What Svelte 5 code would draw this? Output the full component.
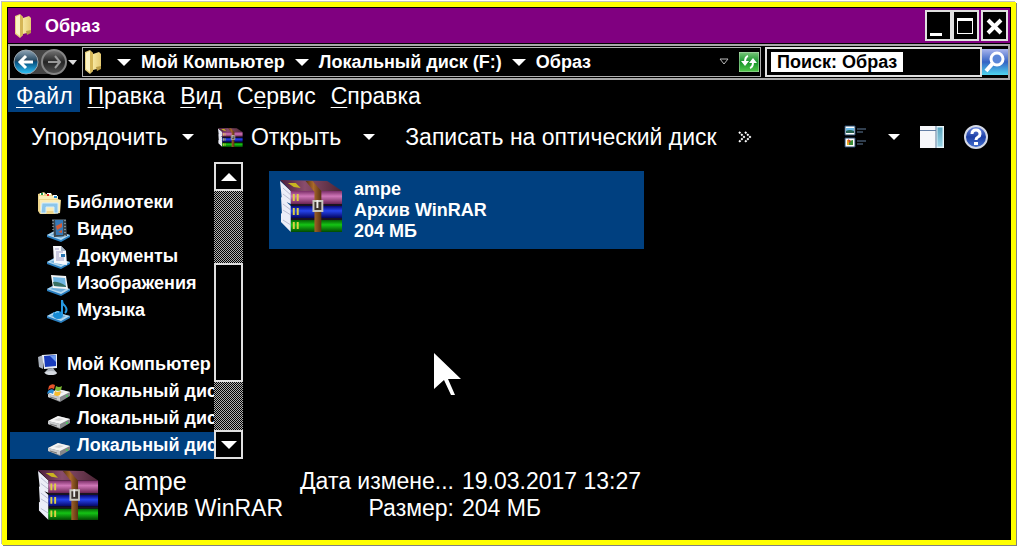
<script lang="ts">
    let query = $state("Поиск: Образ");
    let selectedNode = $state(8);
    let openMenu = $state("Файл");

    const menu = [
        { before: "", key: "Ф", after: "айл" },
        { before: "", key: "П", after: "равка" },
        { before: "", key: "В", after: "ид" },
        { before: "С", key: "е", after: "рвис" },
        { before: "", key: "С", after: "правка" },
    ];

    const crumbs = ["Мой Компьютер", "Локальный диск (F:)", "Образ"];

    const tree = [
        { id: 0, icon: "libraries", label: "Библиотеки", root: true },
        { id: 1, icon: "video", label: "Видео" },
        { id: 2, icon: "documents", label: "Документы" },
        { id: 3, icon: "images", label: "Изображения" },
        { id: 4, icon: "music", label: "Музыка" },
        { id: 5, icon: "computer", label: "Мой Компьютер", root: true, gap: true },
        { id: 6, icon: "system", label: "Локальный диск" },
        { id: 7, icon: "drive", label: "Локальный диск" },
        { id: 8, icon: "drive", label: "Локальный диск" },
    ];
</script>

{#snippet folder()}
    <svg class="folder" viewBox="0 0 20 24" aria-hidden="true">
        <path d="M2 2l5-2 3 3v18l-3 3-5-4z" fill="#e6cf7c" />
        <path d="M3 3l4-2v21l-4-3z" fill="#fbf3c4" />
        <path d="M10 4l6-2 2 2v14l-8 2z" fill="url(#paper)" />
        <path d="M7 1l3 2v18l-3 2z" fill="#d5b656" />
        <path d="M13 17l5-1v3l-4 2z" fill="#b99b45" />
    </svg>
{/snippet}

{#snippet books()}
    <svg class="books" viewBox="0 0 64 52" preserveAspectRatio="none" aria-hidden="true">
        <path d="M0 1l11 10v13L2 20zM1 17l10 9v14l-9-6zM1 33l10 7v12L1 42z" fill="#eceef8" />
        <path d="M3 8l8 7M3 14l8 6M3 24l8 6M3 30l8 5M3 40l8 5" stroke="#b9bcd2" />
        <path d="M0 0l48 1 15 10H11z" fill="url(#cover)" />
        <path d="M11 11h52v13H11z" fill="url(#pink)" />
        <path d="M11 26h52v12H11z" fill="url(#blue)" />
        <path d="M11 40h52v12H11z" fill="url(#green)" />
        <path d="M11 24h52v2H11zM11 38h52v2H11z" fill="#191421" />
        <path d="M8 3l8 0 5 5-7-1z" fill="#c9b420" />
        <path d="M14 14v7M18 14v7M14 28v7M18 28v7M14 42v7M18 42v7" stroke="#ded044" stroke-width="2" />
        <path d="M26 1h7l9 10v41h-7V12z" fill="url(#strap)" />
        <path d="M34 21h9v10h-9z" fill="#3b332c" stroke="#c9c7bd" stroke-width="2" />
        <path d="M38 20v8" stroke="#eee" stroke-width="2" />
    </svg>
{/snippet}

{#snippet arrow()}
    <svg class="arrow" viewBox="0 0 12 6" aria-hidden="true"><path d="M0 0h12L6 6z" fill="#fff" /></svg>
{/snippet}

{#snippet nodeIcon(name: string)}
    <svg class="node-icon" viewBox="0 0 24 24" aria-hidden="true">
        {#if name === "libraries"}
            <path d="M1 3l6-2 2 2h3l2-1 2 3h5v3l3 1-1 13-6 1H3L1 20z" fill="#eed58b" />
            <path d="M2 5h19v3H2zM3 9h20v11H3z" fill="#fbedb7" />
            <path d="M3 3h4M10 3h4M16 5h4" stroke="#fff" stroke-width="2" />
            <path d="M4 3h2" stroke="#2a9a48" stroke-width="2" />
            <path d="M10 4h2" stroke="#d22" stroke-width="2" />
            <path d="M17 6h3" stroke="#28c" stroke-width="2" />
            <path d="M5 12h16v10h-4v-6H9v6H4z" fill="#8cc6ea" stroke="#d6effc" />
        {:else if name === "computer"}
            <path d="M1 4l5-2v14l-4-2z" fill="#a9b0ba" />
            <path d="M5 2l15-1v14L7 16z" fill="#e8edf5" />
            <path d="M7 3l12-1v11L8 14z" fill="#183bbb" />
            <path d="M13 3l6-1v7z" fill="#6f9df0" />
            <path d="M11 16l5-1 3 4-5 2-7-1z" fill="#aab0b8" />
            <ellipse cx="14" cy="20" rx="6" ry="2" fill="#d5dae0" />
        {:else if name === "drive" || name === "system"}
            <path d="M1 14l10-5 12 3v4l-10 6L1 17z" fill="#85878a" />
            <path d="M1 14l10-5 12 3-10 5z" fill="#f4f4f4" />
            <path d="M1 14l12 3v4L1 17z" fill="#c9cbcd" />
            <path d="M7 13l5-2 5 1-5 2z" fill="#d4d4d4" />
            <path d="M3 17l7 2" stroke="#777" />
            <path d="M19 16h2" stroke="#4fc060" stroke-width="2" />
            {#if name === "system"}
                <path d="M2 6q3-3 6-1L7 9Q4 7 1 10z" fill="#e6532b" />
                <path d="M9 6q3 2 6 0l-1 4q-3 2-6 0z" fill="#7fbc35" />
                <path d="M1 11q3-3 6-1l-1 4q-3-2-6 0z" fill="#2b8ed8" />
                <path d="M8 11q3 2 6 0l-1 4q-3 2-6 0z" fill="#f6bb2e" />
            {/if}
        {:else}
            <path d="M0 17l7-4 16 4v2l-9 5L0 19z" fill="#2a7fc0" />
            <path d="M0 17l8-4 15 4-9 5z" fill="#b4d8ef" />
            <path d="M3 17l5-2 11 2-5 3z" fill="#6faedb" />
            {#if name === "video"}
                <path d="M5 1h14l1 17-13 1z" fill="#39444c" />
                <path d="M8 2h8v15H9z" fill="#3579b7" />
                <path d="M9 8l6-3v4l-5 3zM11 14l4-2v3z" fill="#d35b35" />
                <path d="M6 2v16M18 2v16" stroke="#c7d0d4" stroke-dasharray="1 2" />
            {:else if name === "documents"}
                <path d="M6 1h8l5 5 1 14-13-2z" fill="#f5f7fb" />
                <path d="M14 1v5h5z" fill="#a5b3c6" />
                <path d="M8 4h4M9 7h7M9 9h3M9 11h3M9 13h8M9 15h8" stroke="#9e9dc4" />
                <path d="M14 9h4v3h-4z" fill="#2775b0" />
            {:else if name === "images"}
                <path d="M4 3l15 1 2 13-15-1z" fill="#f1f3f4" />
                <path d="M6 5l12 1 1 9-12-1z" fill="#71b7e5" />
                <path d="M6 10q5-1 13 4v1l-12-1z" fill="#376f62" />
            {:else}
                <ellipse cx="11" cy="16" rx="5" ry="4" fill="#168bd5" />
                <path d="M15 16V1q0 4 3 6 3 4 0 7" fill="none" stroke="#2699e2" stroke-width="2" />
                <path d="M8 14q2-2 4-1" stroke="#a5defa" fill="none" />
            {/if}
        {/if}
    </svg>
{/snippet}

<svg class="defs" aria-hidden="true">
    <defs>
        <linearGradient id="paper"><stop stop-color="#f7e7a0" /><stop offset="1" stop-color="#e5ca72" /></linearGradient>
        <linearGradient id="cover"><stop stop-color="#4a1c38" /><stop offset="0.4" stop-color="#8a4d6c" /><stop offset="1" stop-color="#4b2434" /></linearGradient>
        <linearGradient id="pink" x2="0" y2="1"><stop stop-color="#7b2e68" /><stop offset="0.4" stop-color="#d077b8" /><stop offset="1" stop-color="#6a2353" /></linearGradient>
        <linearGradient id="blue" x2="0" y2="1"><stop stop-color="#080875" /><stop offset="0.4" stop-color="#2544ed" /><stop offset="1" stop-color="#04045f" /></linearGradient>
        <linearGradient id="green" x2="0" y2="1"><stop stop-color="#056005" /><stop offset="0.4" stop-color="#14c414" /><stop offset="1" stop-color="#034903" /></linearGradient>
        <linearGradient id="strap"><stop stop-color="#573111" /><stop offset="0.5" stop-color="#aa692b" /><stop offset="1" stop-color="#573111" /></linearGradient>
        <linearGradient id="back" x2="0" y2="1"><stop stop-color="#91a7b8" /><stop offset="0.45" stop-color="#24475f" /><stop offset="0.5" stop-color="#07507f" /><stop offset="1" stop-color="#30c8ff" /></linearGradient>
        <linearGradient id="forward" x2="0" y2="1"><stop stop-color="#777" /><stop offset="0.5" stop-color="#252525" /><stop offset="1" stop-color="#555" /></linearGradient>
        <linearGradient id="refresh" x2="0" y2="1"><stop stop-color="#7bc77c" /><stop offset="0.5" stop-color="#159329" /><stop offset="1" stop-color="#54c94c" /></linearGradient>
        <linearGradient id="lens" x2="0" y2="1"><stop stop-color="#a9b5ed" /><stop offset="0.5" stop-color="#3463c4" /><stop offset="1" stop-color="#4ed6ef" /></linearGradient>
        <linearGradient id="pane" x2="0" y2="1"><stop stop-color="#5aa3bd" /><stop offset="1" stop-color="#9bd3e5" /></linearGradient>
        <linearGradient id="help" x2="0" y2="1"><stop stop-color="#6f8ce4" /><stop offset="0.5" stop-color="#1d3fa5" /><stop offset="1" stop-color="#4774d4" /></linearGradient>
    </defs>
</svg>

<div class="window">
    <header class="title">
        {@render folder()}
        <h1>Образ</h1>
        <div class="controls">
            <button aria-label="Свернуть"><svg viewBox="0 0 23 27"><path d="M3 21h12v3H3z" fill="#fff" /></svg></button>
            <button aria-label="Развернуть"><svg viewBox="0 0 23 27"><path d="M3 6h16v16H3zM4 9v12h14V9z" fill="#fff" fill-rule="evenodd" /></svg></button>
            <button class="close" aria-label="Закрыть"><svg viewBox="0 0 23 27"><path d="M5 8l13 13M18 8L5 21" stroke="#fff" stroke-width="4" /></svg></button>
        </div>
    </header>

    <nav class="nav">
        <button class="history" aria-label="Назад и вперёд">
            <svg viewBox="0 0 70 28">
                <path d="M16 2h28a12 12 0 0 1 0 24H16z" fill="#454545" />
                <circle cx="16" cy="14" r="12" fill="url(#back)" stroke="#9aa5ad" />
                <circle cx="44" cy="14" r="12" fill="url(#forward)" stroke="#858585" stroke-width="2" />
                <path d="M23 14H11M16 8l-6 6 6 6" fill="none" stroke="#fff" stroke-width="3" />
                <path d="M38 14h11M45 8l5 6-5 6" fill="none" stroke="#999" stroke-width="2" />
                <path d="M58 12h9l-4 5z" fill="#ddd" />
            </svg>
        </button>
        <div class="address">
            {@render folder()}
            {#each crumbs as crumb}
                {@render arrow()}
                <a href="#{crumb}">{crumb}</a>
            {/each}
            <button class="recent" aria-label="Предыдущие расположения">
                <svg viewBox="0 0 10 8"><path d="M1 1h8L5 6z" fill="none" stroke="#bbb" /></svg>
            </button>
            <button class="refresh" aria-label="Обновить">
                <svg viewBox="0 0 20 20">
                    <path d="M0 0h20v20H0z" fill="url(#refresh)" stroke="#b8dab8" />
                    <path d="M9 4q-3 1-3 6M11 16q3-1 3-6" fill="none" stroke="#fff" stroke-width="2" />
                    <path d="M2 9h8l-4 5zM10 11h8l-4-5z" fill="#fff" />
                </svg>
            </button>
        </div>
        <div class="search">
            <input type="text" aria-label="Поиск" bind:value={query} />
        </div>
        <button class="lens" aria-label="Найти">
            <svg viewBox="0 0 26 26">
                <path d="M0 0h26v26H0z" fill="url(#lens)" />
                <circle cx="15" cy="10" r="6" fill="#5a86d8" stroke="#fff" stroke-width="3" />
                <path d="M11 14l-7 8" stroke="#fff" stroke-width="4" />
            </svg>
        </button>
    </nav>

    <div class="menu">
        {#each menu as item}
            {@const name = item.before + item.key + item.after}
            <button class:active={openMenu === name} onclick={() => (openMenu = name)}>{item.before}<u>{item.key}</u>{item.after}</button>
        {/each}
    </div>

    <div class="toolbar">
        <button class="tool">Упорядочить {@render arrow()}</button>
        <button class="tool open">{@render books()}Открыть</button>
        <button class="tool split" aria-label="Открыть с помощью">{@render arrow()}</button>
        <button class="tool">Записать на оптический диск</button>
        <button class="tool more" aria-label="Ещё">
            <svg viewBox="0 0 14 12"><path d="M1 1l5 5-5 5M7 1l5 5-5 5" fill="none" stroke="#fff" stroke-width="2" stroke-dasharray="2 1" /></svg>
        </button>
        <div class="view">
            <button class="tool" aria-label="Вид">
                <svg class="view-icon" viewBox="0 0 24 24">
                    <path d="M1 1h10v9H1zM1 13h10v9H1z" fill="#fff" stroke="#24466b" />
                    <path d="M2 3h8v3H2z" fill="#69b8e8" /><path d="M2 6q4-2 8 0v2H2z" fill="#25604f" />
                    <path d="M3 15h3v5H3z" fill="#e8a927" /><path d="M5 16l4-1v5H5z" fill="#3a8c35" /><path d="M4 14l3 2-2 2z" fill="#c32" />
                    <path d="M13 4h9M13 7h6M13 16h9M13 19h6" stroke="#607c9c" />
                </svg>
                {@render arrow()}
            </button>
            <button class="tool" aria-label="Область просмотра">
                <svg class="pane" viewBox="0 0 24 22">
                    <path d="M0 0h24v22H0z" fill="#f6f7fa" />
                    <path d="M0 4h16v1H0z" fill="#647fa5" />
                    <path d="M17 1h6v20h-6z" fill="url(#pane)" stroke="#d7f1f8" />
                    <path d="M16 0v22" stroke="#5c7d9d" />
                </svg>
            </button>
            <button class="tool help" aria-label="Справка">
                <svg viewBox="0 0 24 24">
                    <circle cx="12" cy="12" r="11" fill="url(#help)" stroke="#d4d9e6" stroke-width="2" />
                    <path d="M8 9q0-4 4-4t4 4q0 2-2 3t-2 3" fill="none" stroke="#fff" stroke-width="3" />
                    <path d="M10 17h4v3h-4z" fill="#fff" />
                </svg>
            </button>
        </div>
    </div>

    <main>
        <aside>
            <ul>
                {#each tree as node}
                    <li class:gap={node.gap}>
                        <button class="node" class:root={node.root} class:selected={selectedNode === node.id} onclick={() => (selectedNode = node.id)}>
                            {@render nodeIcon(node.icon)}<span>{node.label}</span>
                        </button>
                    </li>
                {/each}
            </ul>
            <div class="scrollbar">
                <button aria-label="Вверх"><svg viewBox="0 0 16 8"><path d="M0 8h16L8 0z" fill="#fff" /></svg></button>
                <div class="track"><div class="thumb"></div></div>
                <button aria-label="Вниз"><svg viewBox="0 0 16 8"><path d="M0 0h16L8 8z" fill="#fff" /></svg></button>
            </div>
        </aside>
        <section class="files">
            <button class="file">
                {@render books()}
                <span>ampe<br />Архив WinRAR<br />204 МБ</span>
            </button>
            <svg class="cursor" viewBox="0 0 27 43" aria-hidden="true">
                <path d="M0 0l27 26H14l7 16h-4l-7-15-10 9z" fill="#fff" />
            </svg>
        </section>
    </main>

    <footer>
        {@render books()}
        <div class="summary">
            <strong>ampe</strong>
            <span>Архив WinRAR</span>
        </div>
        <dl>
            <dt>Дата измене...</dt>
            <dd>19.03.2017 13:27</dd>
            <dt>Размер:</dt>
            <dd>204 МБ</dd>
        </dl>
    </footer>
</div>

<style>
    :global(body) {
        background: #fff;
    }

    .defs {
        position: absolute;
        width: 0;
        height: 0;
    }

    svg {
        display: block;
        flex: none;
    }

    button {
        margin: 0;
        padding: 0;
        border: 0;
        background: none;
        color: #fff;
        font: inherit;
        text-align: left;
    }

    .window {
        display: flex;
        flex-direction: column;
        box-sizing: border-box;
        min-height: calc(100vh - 4px);
        margin: 2px;
        padding: 1px;
        border: 5px solid #ff0;
        box-shadow: -1px -1px 0 #c0c0c0, 1px 1px 0 #808080;
        background: #000;
        color: #fff;
        font-family: "Liberation Sans", Arial, sans-serif;
        font-size: 23px;
    }

    .title {
        display: flex;
        align-items: center;
        height: 35px;
        padding: 0 2px 0 5px;
        background: #800080;
    }

    .folder {
        width: 20px;
        height: 24px;
    }

    h1 {
        flex: 1;
        margin: 0 0 0 12px;
        font-size: 18px;
        line-height: 20px;
    }

    .controls {
        display: flex;
    }

    .controls button {
        box-sizing: border-box;
        width: 27px;
        height: 31px;
        border: 2px solid #e0e0e0;
        background: #000;
    }

    .controls .close {
        margin-left: 2px;
    }

    .controls svg {
        width: 23px;
        height: 27px;
    }

    .nav {
        display: flex;
        align-items: center;
        box-sizing: border-box;
        height: 36px;
        margin-top: 1px;
        border: 2px solid #a8a8a8;
        font-size: 18px;
        font-weight: bold;
    }

    .history svg {
        width: 70px;
        height: 28px;
    }

    .address {
        display: flex;
        flex: 1;
        align-items: center;
        box-sizing: border-box;
        height: 30px;
        margin-left: 2px;
        padding-right: 1px;
        border: 1px solid #b0b0b0;
    }

    .address .folder {
        margin-right: 4px;
    }

    .arrow {
        width: 12px;
        height: 6px;
    }

    .address .arrow {
        width: 14px;
        height: 7px;
        margin: 0 10px;
    }

    .address a {
        color: #fff;
        text-decoration: none;
    }

    .recent {
        margin-left: auto;
    }

    .recent svg {
        width: 10px;
        height: 8px;
    }

    .refresh {
        margin-left: 10px;
    }

    .refresh svg {
        width: 20px;
        height: 20px;
    }

    .search {
        display: flex;
        align-items: center;
        box-sizing: border-box;
        width: 217px;
        height: 30px;
        margin-left: 4px;
        padding-left: 4px;
        border: 2px solid #e0e0e0;
    }

    input {
        box-sizing: border-box;
        width: 132px;
        height: 20px;
        padding: 0 0 0 6px;
        border: 0;
        outline: 0;
        background: #fff;
        color: #000;
        font: inherit;
    }

    .lens svg {
        width: 26px;
        height: 26px;
    }

    .menu {
        display: flex;
    }

    .menu button {
        height: 32px;
        padding: 0 7px 0 8px;
        line-height: 32px;
    }

    .menu .active {
        background: #004080;
    }

    u {
        text-decoration-thickness: 1px;
        text-underline-offset: 3px;
    }

    .toolbar {
        display: flex;
        align-items: center;
        height: 50px;
        padding: 0 22px 0 23px;
    }

    .tool {
        display: flex;
        align-items: center;
        height: 30px;
        white-space: nowrap;
    }

    .tool .arrow {
        margin-left: 14px;
    }

    .open {
        margin-left: 24px;
    }

    .open .books {
        width: 25px;
        height: 19px;
        margin-right: 8px;
    }

    .split {
        margin: 0 30px 0 8px;
    }

    .more {
        margin-left: 21px;
    }

    .more svg {
        width: 14px;
        height: 12px;
    }

    .view {
        display: flex;
        align-items: center;
        gap: 20px;
        margin-left: auto;
    }

    .view-icon,
    .help svg {
        width: 24px;
        height: 24px;
    }

    .view .arrow {
        margin-left: 20px;
    }

    .pane {
        width: 24px;
        height: 22px;
    }

    main {
        display: flex;
        flex: 1;
    }

    aside {
        display: flex;
        width: 235px;
    }

    ul {
        flex: 1;
        min-width: 0;
        margin: 0;
        padding: 27px 0 0 2px;
        list-style: none;
    }

    .gap {
        margin-top: 27px;
    }

    .node {
        display: flex;
        align-items: center;
        gap: 6px;
        overflow: hidden;
        width: 100%;
        height: 27px;
        padding-left: 37px;
        font-size: 18px;
        font-weight: bold;
        white-space: nowrap;
    }

    .node.root {
        padding-left: 27px;
    }

    .selected {
        background: #004080;
    }

    .node-icon {
        width: 24px;
        height: 24px;
    }

    .scrollbar {
        display: flex;
        flex-direction: column;
        width: 29px;
    }

    .scrollbar button {
        display: flex;
        align-items: center;
        justify-content: center;
        box-sizing: border-box;
        height: 29px;
        border: 2px solid #e0e0e0;
    }

    .scrollbar svg {
        width: 16px;
        height: 8px;
    }

    .track {
        display: grid;
        flex: 1;
        grid-template-rows: 30% 50% 20%;
        background: repeating-conic-gradient(#000 0 25%, #b0b0b0 0 50%) 0 0 / 2px 2px;
    }

    .thumb {
        grid-row: 2;
        border: 2px solid #e0e0e0;
        background: #000;
    }

    .files {
        position: relative;
        flex: 1;
        padding: 9px 0 0 26px;
    }

    .file {
        display: flex;
        align-items: center;
        gap: 11px;
        width: 375px;
        height: 78px;
        padding-left: 11px;
        background: #004080;
        font-size: 18px;
        font-weight: bold;
        line-height: 21px;
    }

    .file .books {
        width: 63px;
        height: 52px;
        margin-bottom: 8px;
    }

    .cursor {
        position: absolute;
        top: 191px;
        left: 191px;
        width: 27px;
        height: 43px;
    }

    footer {
        display: flex;
        padding: 9px 0 17px 30px;
        line-height: 27px;
    }

    footer .books {
        width: 61px;
        height: 50px;
        margin-top: 2px;
    }

    .summary {
        display: flex;
        flex-direction: column;
        margin-left: 25px;
    }

    strong {
        font-size: 25px;
        font-weight: normal;
    }

    dl {
        display: grid;
        grid-template-columns: auto auto;
        column-gap: 8px;
        margin: 0 0 0 17px;
    }

    dt {
        text-align: right;
    }

    dd {
        margin: 0;
    }
</style>
